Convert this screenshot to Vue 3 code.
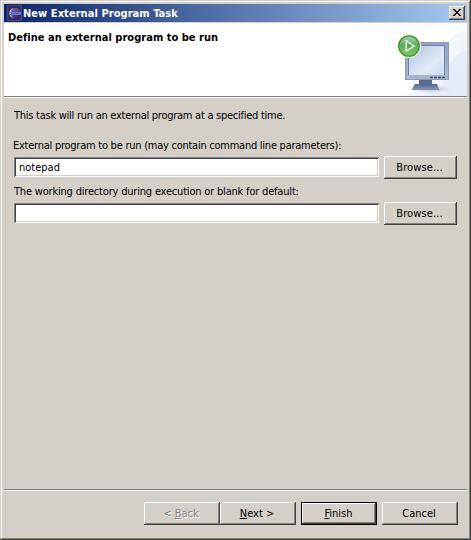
<script setup>
import { ref } from 'vue'

const fields = ref([
  { id: 'program', label: 'External program to be run (may contain command line parameters):', value: 'notepad' },
  { id: 'directory', label: 'The working directory during execution or blank for default:', value: '' },
])
</script>

<template>
  <div class="window">
    <header class="titlebar">
      <svg class="app-icon" width="16" height="16" viewBox="0 0 16 16">
        <defs>
          <linearGradient id="app-bg" x1="0" y1="0" x2="1" y2="0">
            <stop offset="0" stop-color="#392b68" />
            <stop offset=".55" stop-color="#292150" />
            <stop offset="1" stop-color="#3f2f78" />
          </linearGradient>
          <linearGradient id="app-ball" x1="0" y1="0" x2="1" y2="1">
            <stop offset="0" stop-color="#8578b8" />
            <stop offset="1" stop-color="#1d1950" />
          </linearGradient>
        </defs>
        <rect x=".5" y=".5" width="14" height="15" fill="url(#app-bg)" stroke="#574089" />
        <circle cx="8.6" cy="8" r="5.3" fill="url(#app-ball)" />
        <path d="M6.500 2.500C3.200 4 2 6 2.200 8.200c.2 2.600 1.600 4.500 4.300 5.500C4.600 11.800 4 10 4 8s.8-3.900 2.500-5.500z" fill="#b9b0d2" />
        <path d="M3 7.500h11M3 9.500h11" stroke="#6a78cc" stroke-width="1" />
        <path d="M4 8.500h10" stroke="#5e68c4" stroke-width="1" />
      </svg>
      <span class="caption">New External Program Task</span>
      <button class="close" aria-label="Close">
        <svg width="8" height="7" viewBox="0 0 8 7" shape-rendering="crispEdges">
          <path d="M0 0h2v1h1v1h2V1h1V0h2v1H7v1H6v1H5v1h1v1h1v1h1v1H6V6H5V5H3v1H2v1H0V6h1V5h1V4h1V3H2V2H1V1H0z" fill="#000" />
        </svg>
      </button>
    </header>

    <section class="banner">
      <h1>Define an external program to be run</h1>
      <svg class="art" width="75" height="73" viewBox="392 23 75 73">
        <defs>
          <linearGradient id="swoosh" x1="0" y1="0" x2="1" y2="1">
            <stop offset="0" stop-color="#fff" />
            <stop offset="1" stop-color="#d9e4f5" />
          </linearGradient>
          <linearGradient id="screen" x1="0" y1="0" x2="1" y2="1">
            <stop offset="0" stop-color="#a9c2e2" />
            <stop offset=".65" stop-color="#e2ebf7" />
            <stop offset="1" stop-color="#c6d7ec" />
          </linearGradient>
          <linearGradient id="frame" x1="0" y1="0" x2="0" y2="1">
            <stop offset="0" stop-color="#94a3bf" />
            <stop offset="1" stop-color="#a9b6cd" />
          </linearGradient>
          <linearGradient id="foot" x1="0" y1="0" x2="0" y2="1">
            <stop offset="0" stop-color="#526688" />
            <stop offset="1" stop-color="#8799b7" />
          </linearGradient>
          <linearGradient id="play" x1="0" y1="0" x2="0" y2="1">
            <stop offset="0" stop-color="#a9cfa6" />
            <stop offset=".45" stop-color="#5fae5c" />
            <stop offset="1" stop-color="#7ccf57" />
          </linearGradient>
          <radialGradient id="shade">
            <stop offset="0" stop-color="#b3a6b4" />
            <stop offset="1" stop-color="#e5e4ee" stop-opacity="0" />
          </radialGradient>
        </defs>
        <path d="M467 28C452 34 444 44 438 62s-18 30-34 34h63z" fill="url(#swoosh)" opacity=".6" />
        <path d="M467 50C454 53 448 66 446 76s-14 17-24 20h45z" fill="#dfe8f6" opacity=".6" />
        <ellipse cx="431" cy="89" rx="24" ry="4.500" fill="url(#shade)" />
        <path d="M419 79h13v6h-13z" fill="#5a6c8c" />
        <path d="M415 84h22l2.500 6h-28z" fill="url(#foot)" />
        <path d="M405 42h44v37.500h-44z" fill="url(#frame)" />
        <path d="M405.500 79V42.500h43" fill="none" stroke="#8b9bb8" />
        <path d="M448.500 42v37.500H405" fill="none" stroke="#8b9bb9" />
        <path d="M408 45h37v30h-37z" fill="url(#screen)" />
        <path d="M408.500 75V45.500H445" fill="none" stroke="#6b7fa2" />
        <path d="M444.500 46v29" fill="none" stroke="#7587a8" />
        <path d="M430 77.500h15" stroke="#44536f" stroke-width="1.400" stroke-dasharray="3 1" />
        <circle cx="409" cy="46" r="12" fill="#f5f5c6" />
        <circle cx="409" cy="46" r="10.200" fill="url(#play)" stroke="#399040" stroke-width="1.300" />
        <path d="M406.200 40.700v10.600l7.800-5.300z" fill="#52ad4a" stroke="#fff" stroke-width="1.300" />
      </svg>
    </section>

    <main class="page">
      <p class="intro">This task will run an external program at a specified time.</p>
      <div v-for="field in fields" :key="field.id" class="field">
        <label :for="field.id" :class="field.id">{{ field.label }}</label>
        <div class="row">
          <input :id="field.id" v-model="field.value" type="text" spellcheck="false" />
          <button class="btn browse">Browse...</button>
        </div>
      </div>
    </main>

    <footer class="actions">
      <div class="pair">
        <button class="btn off" disabled>&lt; <u>B</u>ack</button>
        <button class="btn"><u>N</u>ext &gt;</button>
      </div>
      <button class="btn default"><u>F</u>inish</button>
      <button class="btn">Cancel</button>
    </footer>
  </div>
</template>

<style>
body {
  margin: 0;
  overflow: hidden;
}
</style>

<style scoped>
.window,
.window * {
  box-sizing: border-box;
}
.window {
  display: flex;
  flex-direction: column;
  width: 471px;
  height: 540px;
  padding: 4px;
  background: #d4d0c8;
  color: #000;
  box-shadow: inset -1px -1px #404040, inset 1px 1px #d4d0c8, inset -2px -2px #808080, inset 2px 2px #fff;
  font: 11px/14px "DejaVu Sans Condensed", "DejaVu Sans", sans-serif;
  font-stretch: condensed;
}
button,
input {
  font: inherit;
  color: inherit;
}
.titlebar {
  display: flex;
  flex: none;
  align-items: center;
  height: 18px;
  width: 463px;
  padding: 0 2px 0 3px;
  background: linear-gradient(90deg, #0a246a, #a6caf0);
  color: #fff;
}
.app-icon {
  flex: none;
}
.caption {
  flex: 1;
  padding-top: 1px;
  font-weight: bold;
  white-space: nowrap;
  letter-spacing: 0.06px;
}
.close {
  display: flex;
  align-items: center;
  justify-content: center;
  width: 16px;
  height: 14px;
  padding: 0 1px 1px 0;
  border: 0;
  background: #d4d0c8;
  box-shadow: inset -1px -1px #404040, inset 1px 1px #fff, inset -2px -2px #808080;
}
.banner {
  display: flex;
  flex: none;
  justify-content: space-between;
  width: 463px;
  height: 75px;
  margin-top: 1px;
  background: #fff;
  border-bottom: 1px solid #fff;
  box-shadow: inset 0 -1px #808080;
}
h1 {
  margin: 8px 0 0 4px;
  font-size: 11px;
  line-height: 14px;
  font-weight: bold;
  white-space: nowrap;
  letter-spacing: 0.02px;
}
.art {
  flex: none;
}
.page {
  flex: 1;
  padding: 11px 9px 0 10px;
}
.intro {
  margin: 0 0 16px;
  white-space: nowrap;
  letter-spacing: -0.26px;
}
.field {
  height: 46px;
}
label {
  display: block;
  height: 17px;
  white-space: nowrap;
}
.program {
  margin-left: -1px;
  letter-spacing: -0.25px;
}
.directory {
  letter-spacing: -0.19px;
}
.row {
  display: flex;
  gap: 5px;
}
input {
  width: 365px;
  height: 20px;
  margin-top: 1px;
  padding: 0 5px;
  border: 0;
  outline: 0;
  background: #fff;
  box-shadow: inset 1px 1px #808080, inset -1px -1px #fff, inset 2px 2px #404040, inset -2px -2px #d4d0c8;
}
.btn {
  width: 76px;
  height: 23px;
  padding: 1px 2px 0 0;
  border: 0;
  background: #d4d0c8;
  box-shadow: inset -1px -1px #404040, inset 1px 1px #fff, inset -2px -2px #808080;
  white-space: nowrap;
}
.browse {
  width: 73px;
  letter-spacing: 0.12px;
}
.default {
  border: 1px solid #000;
  padding: 1px 1px 0 0;
}
.off {
  color: #808080;
  text-shadow: 1px 1px #fff;
}
u {
  text-underline-offset: 1px;
  text-decoration-thickness: 1px;
}
.actions {
  display: flex;
  flex: none;
  justify-content: flex-end;
  gap: 5px;
  width: 463px;
  height: 47px;
  padding: 13px 9px 0 0;
  box-shadow: inset 0 1px #808080, inset 0 2px #fff;
}
.pair {
  display: flex;
}
</style>
